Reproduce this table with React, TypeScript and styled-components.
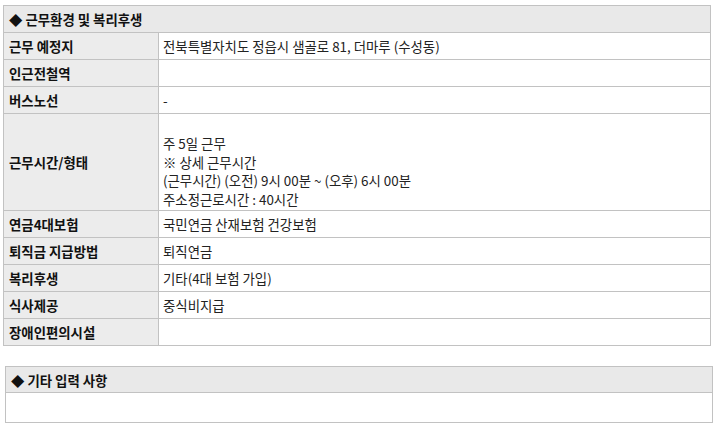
import React from "react";
import styled, { createGlobalStyle } from "styled-components";

const GlobalStyle = createGlobalStyle`
  body {
    margin: 0;
    background: #fff;
    font-family: "Noto Sans CJK KR", "Noto Sans", sans-serif;
    color: #222;
  }
`;

type Row = { label: string; value: string[]; tall?: boolean };

const rows: Row[] = [
  { label: "근무 예정지", value: ["전북특별자치도 정읍시 샘골로 81, 더마루 (수성동)"] },
  { label: "인근전철역", value: [] },
  { label: "버스노선", value: ["-"] },
  {
    label: "근무시간/형태",
    value: [
      "주 5일 근무",
      "※ 상세 근무시간",
      "(근무시간) (오전) 9시 00분 ~ (오후) 6시 00분",
      "주소정근로시간 : 40시간",
    ],
    tall: true,
  },
  { label: "연금4대보험", value: ["국민연금 산재보험 건강보험"] },
  { label: "퇴직금 지급방법", value: ["퇴직연금"] },
  { label: "복리후생", value: ["기타(4대 보험 가입)"] },
  { label: "식사제공", value: ["중식비지급"] },
  { label: "장애인편의시설", value: [] },
];

const Page = styled.div`
  padding-top: 5px;
  display: flex;
  flex-direction: column;
  gap: 20px;
`;

const Table = styled.table<{ $offset: number }>`
  margin-left: ${({ $offset }) => $offset}px;
  width: 708px;
  border-collapse: collapse;
  table-layout: fixed;
  font-size: 13.4px;
`;

const LabelCol = styled.col`
  width: 155px;
`;

const HeadCell = styled.th<{ $h: number }>`
  height: ${({ $h }) => $h}px;
  padding: 0 5px;
  background: #e9e9e9;
  border: 1px solid #c2c2c2;
  text-align: left;
  font-weight: 700;
  color: #111;
`;

const Label = styled.th`
  height: 26px;
  padding: 0 5px;
  background: #ececec;
  border: 1px solid #c2c2c2;
  text-align: left;
  font-weight: 700;
  color: #111;
  white-space: nowrap;
`;

const Value = styled.td<{ $tall?: boolean }>`
  height: ${({ $tall }) => ($tall ? "76px" : "26px")};
  padding: ${({ $tall }) => ($tall ? "20px 4px 0" : "0 4px")};
  border: 1px solid #c2c2c2;
  background: #fff;
  color: #222;
  line-height: ${({ $tall }) => ($tall ? "18.5px" : "normal")};
  vertical-align: ${({ $tall }) => ($tall ? "top" : "middle")};
`;

const EmptyCell = styled.td`
  height: 27px;
  border: 1px solid #c2c2c2;
  background: #fff;
`;

export default function App() {
  return (
    <>
      <GlobalStyle />
      <Page>
        <Table $offset={3}>
          <colgroup>
            <LabelCol />
            <col />
          </colgroup>
          <thead>
            <tr>
              <HeadCell $h={26} colSpan={2}>
                ◆ 근무환경 및 복리후생
              </HeadCell>
            </tr>
          </thead>
          <tbody>
            {rows.map((r) => (
              <tr key={r.label}>
                <Label>{r.label}</Label>
                <Value $tall={r.tall}>
                  {r.value.map((line, i) => (
                    <div key={i}>{line}</div>
                  ))}
                </Value>
              </tr>
            ))}
          </tbody>
        </Table>
        <Table $offset={5}>
          <thead>
            <tr>
              <HeadCell $h={25}>◆ 기타 입력 사항</HeadCell>
            </tr>
          </thead>
          <tbody>
            <tr>
              <EmptyCell />
            </tr>
          </tbody>
        </Table>
      </Page>
    </>
  );
}
